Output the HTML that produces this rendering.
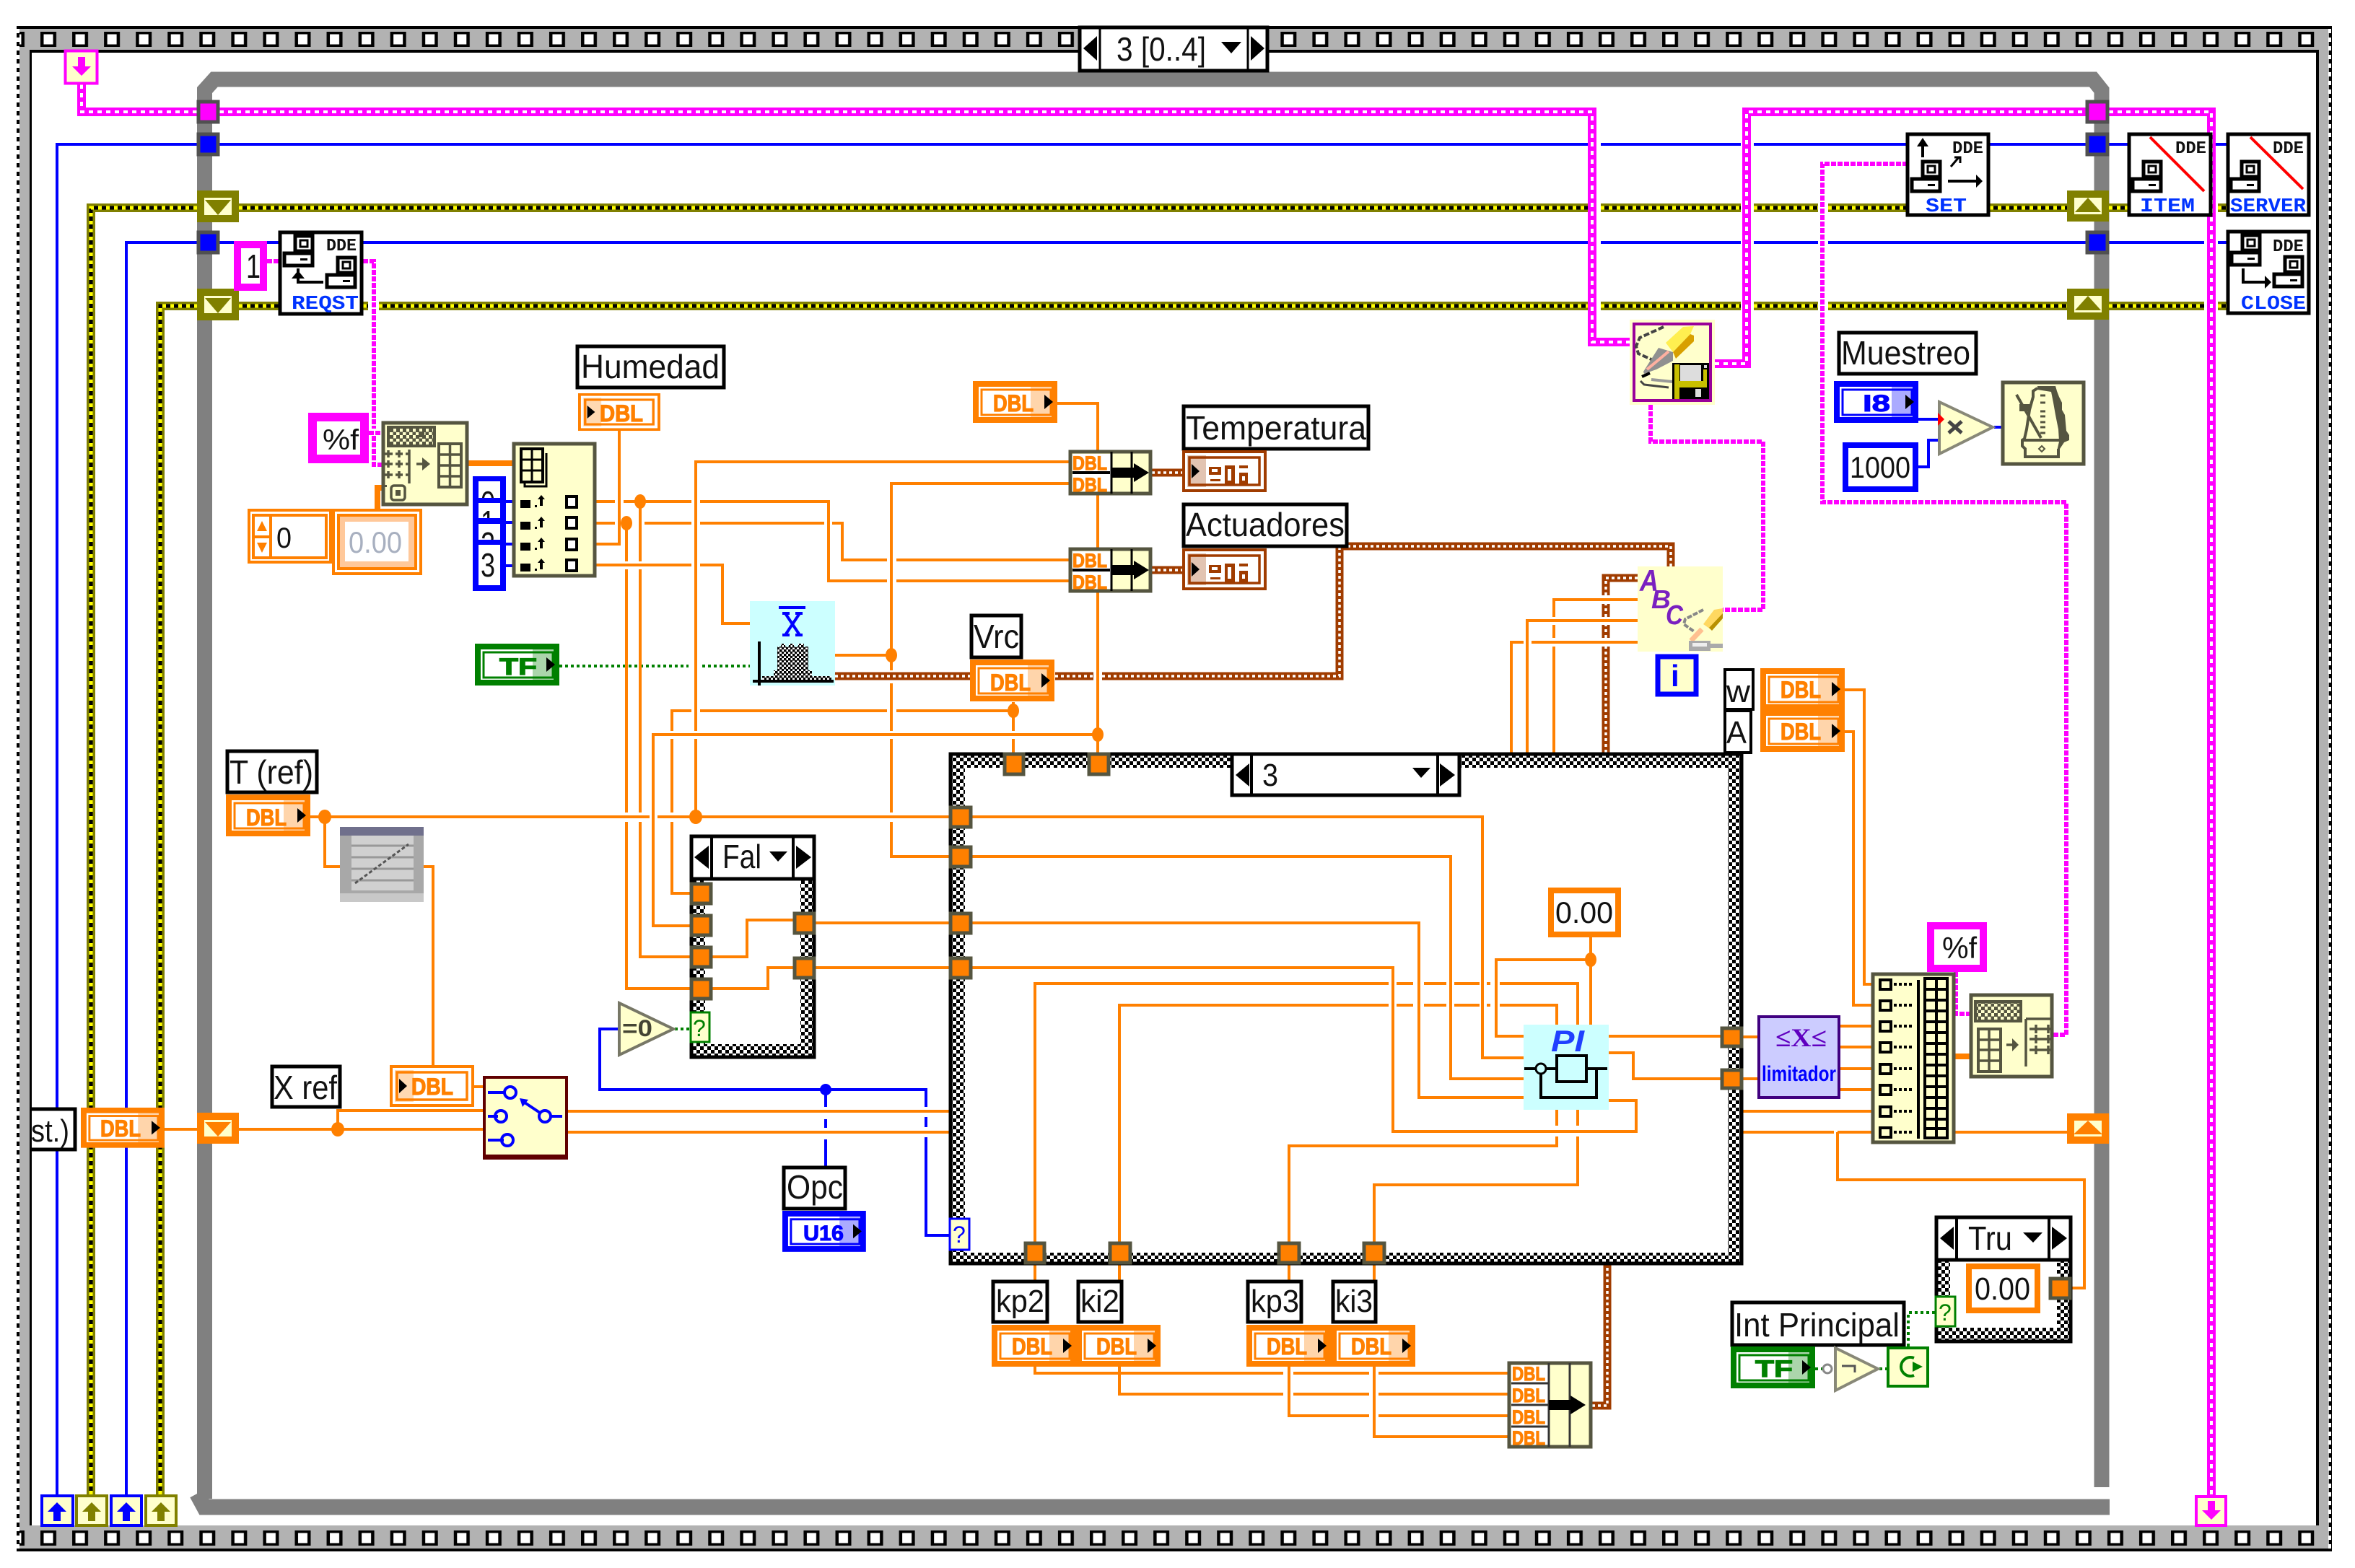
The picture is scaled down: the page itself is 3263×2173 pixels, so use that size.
<!DOCTYPE html>
<html><head><meta charset="utf-8"><title>Block diagram</title>
<style>
html,body{margin:0;padding:0;background:#fff;width:3263px;height:2173px;overflow:hidden}
svg{display:block}
text{font-family:"Liberation Sans",sans-serif;fill:#111}
.l{font-size:46px}
.b{font-weight:bold}
.m{font-family:"Liberation Mono",monospace;font-weight:bold}
.dO{font-weight:bold;fill:#ff8000;stroke:#ff8000;stroke-width:1.2px}
.dB{font-weight:bold;fill:#0000ff;stroke:#0000ff;stroke-width:1px}
.dG{font-weight:bold;fill:#008000;stroke:#008000;stroke-width:1.2px}
.o{fill:none;stroke:#ff8000;stroke-width:4}
.bl{fill:none;stroke:#0000ff;stroke-width:4}
.g{fill:none;stroke:#008000;stroke-width:4;stroke-dasharray:4 4}
.mt{fill:none;stroke:#ff00ff;stroke-width:12}
.mtd{fill:none;stroke:#fff;stroke-width:4;stroke-dasharray:6 6}
.mn{fill:none;stroke:#ff00ff;stroke-width:6;stroke-dasharray:7 2}
.y1{fill:none;stroke:#808000;stroke-width:12}
.y2{fill:none;stroke:#000;stroke-width:5}
.y3{fill:none;stroke:#ffff00;stroke-width:5;stroke-dasharray:5 6}
.br{fill:none;stroke:#a03c00;stroke-width:11}
.brd{fill:none;stroke:#fff;stroke-width:3.5;stroke-dasharray:4 4}
.lb{fill:#fff;stroke:#000;stroke-width:5}
.tn{fill:#ff8000;stroke:#555540;stroke-width:5}
.ic{fill:#ffffcc;stroke:#555540;stroke-width:5}
.n{fill:#ff8000}
.dde{fill:#fff;stroke:#000;stroke-width:5}
.blue{fill:#0033ff}
</style></head>
<body>
<svg xmlns="http://www.w3.org/2000/svg" width="3263" height="2173" viewBox="0 0 3263 2173">
<defs>
<pattern id="chk" width="10" height="10" patternUnits="userSpaceOnUse"><rect width="10" height="10" fill="#fff"/><rect width="5" height="5" fill="#000"/><rect x="5" y="5" width="5" height="5" fill="#000"/></pattern>
<pattern id="chk3" width="6" height="6" patternUnits="userSpaceOnUse"><rect width="6" height="6" fill="#fff"/><rect width="3.500" height="3.500" fill="#000"/><rect x="3" y="3" width="3.500" height="3.500" fill="#000"/></pattern>
<pattern id="chk4" width="9" height="9" patternUnits="userSpaceOnUse"><rect width="9" height="9" fill="#ffffcc"/><rect width="5" height="5" fill="#555540"/><rect x="4.500" y="4.500" width="5" height="5" fill="#555540"/></pattern>
<pattern id="ft" x="56" y="44" width="44.06" height="40" patternUnits="userSpaceOnUse"><rect width="22" height="21" fill="#000"/><rect x="4.5" y="3.5" width="13" height="14" fill="#fff"/></pattern>
<pattern id="fb" x="56" y="2121" width="44.06" height="40" patternUnits="userSpaceOnUse"><rect width="22" height="21" fill="#000"/><rect x="4.5" y="3.5" width="13" height="14" fill="#fff"/></pattern>
<g id="ctl">
<rect x="4" y="4" width="109" height="50" fill="#fff" stroke="currentColor" stroke-width="8"/>
<rect x="12" y="12" width="96" height="35" fill="#fff" stroke="currentColor" stroke-width="3"/>
<rect x="80" y="8" width="30" height="42" fill="currentColor" opacity=".33"/>
<polygon points="99,19 111,29 99,39" fill="#000"/>
</g>
<g id="ind">
<rect x="2" y="2" width="113" height="54" fill="#fff" stroke="currentColor" stroke-width="4"/>
<rect x="10" y="10" width="97" height="38" fill="#fff" stroke="currentColor" stroke-width="3.5"/>
<rect x="7" y="7" width="26" height="44" fill="currentColor" opacity=".3"/>
<polygon points="13,19 24,29 13,39" fill="#000"/>
</g>
<g id="pc">
<rect x="17" y="2" width="24" height="21" class="dde"/>
<rect x="24" y="8" width="10" height="9" fill="#fff" stroke="#000" stroke-width="3"/>
<rect x="2" y="26" width="39" height="17" class="dde"/>
<rect x="24" y="33" width="10" height="3" fill="#000"/>
</g>
<g id="bundle2">
<rect x="2" y="2" width="111" height="58" class="ic"/>
<rect x="5" y="5" width="54" height="52" fill="#fff"/>
<line x1="5" y1="31" x2="57" y2="31" stroke="#000" stroke-width="4"/>
<line x1="59" y1="2" x2="59" y2="60" stroke="#000" stroke-width="3"/>
<line x1="87" y1="2" x2="87" y2="60" stroke="#000" stroke-width="3"/>
<path d="M60 24h30v-6l21 13-21 13v-6h-30z" fill="#000"/>
</g>
<g id="arrD"><path d="M-5 -14h10v13h8l-13 13-13-13h8z"/></g>
</defs>

<rect width="3263" height="2173" fill="#fff"/>

<!-- outer sequence frame -->
<rect x="23" y="36" width="3208" height="2114" fill="#000"/>
<rect x="27" y="40" width="3200" height="2106" fill="#b2b2b2"/>
<rect x="41" y="69" width="3172" height="2045" fill="#000"/>
<rect x="44" y="73" width="3165" height="2041" fill="#fff" stroke="none"/>
<rect x="27" y="40" width="3199" height="29" fill="url(#ft)"/>
<rect x="27" y="2118" width="3199" height="28" fill="url(#fb)"/>
<line x1="25" y1="40" x2="25" y2="2146" stroke="#fff" stroke-width="4" stroke-dasharray="6 6"/>
<line x1="3228" y1="40" x2="3228" y2="2146" stroke="#fff" stroke-width="4" stroke-dasharray="6 6"/>

<!-- while loop frame -->
<path d="M283.5 2077V125L297 110H2900L2912 125V2061" fill="none" stroke="#808080" stroke-width="21"/>
<path d="M273 2070L283 2088.5H2923" fill="none" stroke="#808080" stroke-width="22"/>

<!-- selector top -->
<rect x="1496" y="38" width="260" height="60" fill="#fff" stroke="#000" stroke-width="5"/>
<line x1="1524" y1="38" x2="1524" y2="96" stroke="#000" stroke-width="3"/>
<line x1="1729" y1="38" x2="1729" y2="96" stroke="#000" stroke-width="3"/>
<polygon points="1520,50 1501,67 1520,84" fill="#000"/>
<polygon points="1733,50 1752,67 1733,84" fill="#000"/>
<polygon points="1692,58 1720,58 1706,74" fill="#000"/>
<text x="1547" y="84" class="l" textLength="124" lengthAdjust="spacingAndGlyphs">3 [0..4]</text>

<!-- thick wires: yellow -->
<path class="y1" d="M126 2071V288H273M331 288H2200M2218 288H2412M2430 288H2519M2533 288H2641M2757 288H2864M2922 288H2948M3073 288H3085"/>
<path class="y1" d="M222 2071V424H273M331 424H386M503 424H510M525 424H2200M2218 424H2412M2430 424H2519M2533 424H2864M2922 424H3054M3073 424H3085"/>
<path class="y2" d="M126 2071V288H273M331 288H2200M2218 288H2412M2430 288H2519M2533 288H2641M2757 288H2864M2922 288H2948M3073 288H3085"/>
<path class="y2" d="M222 2071V424H273M331 424H386M503 424H510M525 424H2200M2218 424H2412M2430 424H2519M2533 424H2864M2922 424H3054M3073 424H3085"/>
<path class="y3" d="M126 2071V288H273M331 288H2200M2218 288H2412M2430 288H2519M2533 288H2641M2757 288H2864M2922 288H2948M3073 288H3085"/>
<path class="y3" d="M222 2071V424H273M331 424H386M503 424H510M525 424H2200M2218 424H2412M2430 424H2519M2533 424H2864M2922 424H3054M3073 424H3085"/>

<!-- blue wires -->
<path class="bl" d="M79 2071V200H273M304 200H2200M2218 200H2412M2430 200H2641M2757 200H2890M2922 200H2948M3065 200H3085"/>
<path class="bl" d="M175 2071V336H273M304 336H324M370 336H386M503 336H2200M2218 336H2412M2430 336H2519M2533 336H2890M2922 336H3054M3073 336H3085"/>
<path class="bl" d="M701 695H710M701 724H710M701 754H710M701 784H710"/>
<path class="bl" d="M2658 581H2685M2658 647H2672V610H2685M2763 592H2773"/>
<path class="bl" d="M856 1426H831V1510H1283V1534M1283 1548V1562M1283 1576V1712H1315"/>
<path class="bl" d="M1144 1510V1534M1144 1551V1563M1144 1579V1616"/>
<circle cx="1144" cy="1510" r="8" fill="#0000ff"/>

<!-- magenta wires -->
<path class="mt" d="M113 117V155H273M304 155H2206V474H2261M2376 504H2420V155H2890M2922 155H3064V2072"/>
<path class="mtd" d="M113 117V155H273M304 155H2206V474H2261M2376 504H2420V155H2890M2922 155H3064V2072"/>
<path class="mn" d="M370 362H386M503 362H518V594M511 600H530M518 604V644H530M2710 1347V1405H2729M2845 1434H2863V696H2525V227H2641M2287 561V612H2443V845H2387"/>

<!-- brown wires -->
<path class="br" d="M1596 655H1638M1596 790H1638M1157 937H1344M1462 937H1515M1527 937H1856V757H2315V785M2225 1043V896M2225 884V866M2225 855V837M2225 825V801H2269M2206 1948H2227V1753"/>
<path class="brd" d="M1596 655H1638M1596 790H1638M1157 937H1344M1462 937H1515M1527 937H1856V757H2315V785M2225 1043V896M2225 884V866M2225 855V837M2225 825V801H2269M2206 1948H2227V1753"/>

<!-- green wires -->
<path class="g" d="M775 923H954M973 923H1039M935 1426H956M2644 1866V1819H2681M2515 1897H2526M2604 1897H2614"/>

<!-- orange wires outside cases -->
<path class="o" d="M826 695H852M864 695H958M970 695H1148V805H1229M1242 805H1481"/>
<path class="o" d="M826 725H852M893 725H958M970 725H1142M1153 725H1167V776H1229M1242 776H1481"/>
<path class="o" d="M826 754H858V597"/>
<path class="o" d="M826 783H958M970 783H1001V864H1039"/>
<path class="o" d="M868 725V778M868 789V1126M868 1139V1370H956"/>
<path class="o" d="M887 695V778M887 789V1126M887 1139V1326H956"/>
<path class="o" d="M1521 1018H905V1283H956"/>
<path class="o" d="M1404 985H1242M1229 985H970M958 985H931V1013M931 1024V1126M931 1139V1238H956"/>
<path class="o" d="M1481 640H964V1013M964 1024V1132"/>
<path class="o" d="M430 1132H900M911 1132H1315"/>
<path class="o" d="M1481 670H1235V929M1235 947V1013M1235 1024V1126M1235 1139V1187H1315"/>
<path class="o" d="M1157 908H1235"/>
<path class="o" d="M1130 1279H1315M1130 1341H1315"/>
<path class="o" d="M1404 973V1013M1404 1024V1043"/>
<path class="o" d="M1465 559H1521V1043"/>
<path class="o" d="M2269 831H2153V855M2153 866V884M2153 896V1043M2269 860H2116V1043M2269 890H2122M2111 890H2094V1043"/>
<path class="o" d="M2415 1437H2435M2415 1495H2435"/>
<path class="o" d="M1434 1753V1774M1551 1753V1774M1786 1753V1774M1904 1753V1774"/>
<path class="o" d="M1434 1893V1903H1778M1792 1903H1897M1910 1903H2089M1551 1893V1932H1778M1792 1932H1897M1910 1932H2089M1786 1893V1962H1897M1910 1962H2089M1904 1893V1991H2089"/>
<path class="o" d="M2555 956H2583V1364H2593M2555 1014H2568V1393H2593M2550 1422H2593M2550 1451H2593M2550 1481H2593M2550 1510H2593M785 1540H2593M785 1569H2541M2546 1569H2593M2546 1569V1635H2888V1785H2870M2827 1785H2839M2709 1569H2864"/>
<path class="o" d="M228 1565H273M331 1565H669M468 1565V1539H669M657 1506H669M600 1476V1201H587M450 1132V1201H471"/>
<path d="M647 642H710M2709 1464H2729M523 705V676H530" fill="none" stroke="#ff8000" stroke-width="8"/>
<ellipse class="n" cx="887" cy="695" rx="8" ry="10"/>
<ellipse class="n" cx="868" cy="725" rx="8" ry="10"/>
<ellipse class="n" cx="964" cy="1132" rx="9" ry="10"/>
<ellipse class="n" cx="450" cy="1132" rx="9" ry="10"/>
<ellipse class="n" cx="1235" cy="908" rx="8" ry="10"/>
<ellipse class="n" cx="1404" cy="985" rx="8" ry="10"/>
<ellipse class="n" cx="1521" cy="1018" rx="8" ry="10"/>
<ellipse class="n" cx="468" cy="1565" rx="9" ry="10"/>

<!-- tunnels on while -->
<rect x="275" y="141" width="27" height="28" fill="#ff00ff" stroke="#505050" stroke-width="5"/>
<rect x="275" y="186" width="27" height="28" fill="#0000ff" stroke="#505050" stroke-width="5"/>
<rect x="275" y="322" width="27" height="28" fill="#0000ff" stroke="#505050" stroke-width="5"/>
<rect x="2892" y="141" width="28" height="28" fill="#ff00ff" stroke="#505050" stroke-width="5"/>
<rect x="2892" y="186" width="28" height="28" fill="#0000ff" stroke="#505050" stroke-width="5"/>
<rect x="2892" y="322" width="28" height="28" fill="#0000ff" stroke="#505050" stroke-width="5"/>

<!-- shift registers -->
<rect x="278" y="269" width="48" height="34" fill="#ffffcc" stroke="#808000" stroke-width="10"/>
<polygon points="284,277 320,277 302,298" fill="#808000"/>
<rect x="278" y="405" width="48" height="34" fill="#ffffcc" stroke="#808000" stroke-width="10"/>
<polygon points="284,413 320,413 302,434" fill="#808000"/>
<rect x="2869" y="269" width="48" height="33" fill="#ffffcc" stroke="#808000" stroke-width="10"/>
<polygon points="2875,294 2911,294 2893,274" fill="#808000"/>
<rect x="2869" y="405" width="48" height="33" fill="#ffffcc" stroke="#808000" stroke-width="10"/>
<polygon points="2875,430 2911,430 2893,410" fill="#808000"/>
<rect x="278" y="1547" width="48" height="33" fill="#ffffcc" stroke="#ff8000" stroke-width="10"/>
<polygon points="284,1555 320,1555 302,1575" fill="#ff8000"/>
<rect x="2869" y="1548" width="48" height="32" fill="#ffffcc" stroke="#ff8000" stroke-width="10"/>
<polygon points="2873,1572 2913,1572 2893,1553" fill="#ff8000"/>

<!-- sequence local boxes -->
<rect x="90.500" y="70.500" width="44" height="45" fill="#ffffcc" stroke="#ff00ff" stroke-width="4"/>
<g transform="translate(113 93)" fill="#ff00ff"><use href="#arrD"/></g>
<rect x="3043" y="2074" width="41" height="40" fill="#ffffcc" stroke="#ff00ff" stroke-width="4"/>
<g transform="translate(3064 2094)" fill="#ff00ff"><use href="#arrD"/></g>
<rect x="58" y="2073" width="43" height="41" fill="#ffffcc" stroke="#0000ff" stroke-width="4"/>
<g transform="translate(79 2094) scale(1 -1)" fill="#0000ff"><use href="#arrD"/></g>
<rect x="106" y="2073" width="42" height="41" fill="#ffffcc" stroke="#808000" stroke-width="4"/>
<g transform="translate(127 2094) scale(1 -1)" fill="#808000"><use href="#arrD"/></g>
<rect x="154" y="2073" width="42" height="41" fill="#ffffcc" stroke="#0000ff" stroke-width="4"/>
<g transform="translate(175 2094) scale(1 -1)" fill="#0000ff"><use href="#arrD"/></g>
<rect x="202" y="2073" width="42" height="41" fill="#ffffcc" stroke="#808000" stroke-width="4"/>
<g transform="translate(223 2094) scale(1 -1)" fill="#808000"><use href="#arrD"/></g>

<!-- DDE REQST -->
<rect x="388" y="322" width="113" height="113" fill="#fff" stroke="#000" stroke-width="5"/>
<use href="#pc" x="392" y="325"/>
<use href="#pc" x="451" y="355"/>
<text class="m" x="452" y="347" font-size="24" textLength="42" lengthAdjust="spacingAndGlyphs">DDE</text>
<path d="M413 372V391H448" fill="none" stroke="#000" stroke-width="4"/><polygon points="413,375 404,386 422,386" fill="#000"/>
<text class="m blue" x="404" y="428" font-size="27" textLength="93" lengthAdjust="spacingAndGlyphs">REQST</text>
<!-- 1 const -->
<rect x="329" y="339" width="36" height="59" fill="#fff" stroke="#ff00ff" stroke-width="10"/>
<text x="341" y="385" class="l" textLength="20" lengthAdjust="spacingAndGlyphs">1</text>

<!-- %f + format -->
<rect x="433" y="578" width="72" height="58" fill="#fff" stroke="#ff00ff" stroke-width="12"/>
<text x="447" y="623" font-size="40" textLength="50" lengthAdjust="spacingAndGlyphs">%f</text>
<rect x="531" y="586" width="116" height="113" class="ic"/>
<rect x="538" y="592" width="64" height="26" fill="url(#chk4)" stroke="#555540" stroke-width="4"/>
<rect x="580" y="598" width="8" height="8" fill="#555540"/>
<rect x="608" y="615" width="31" height="60" fill="none" stroke="#555540" stroke-width="4"/>
<path d="M623.500 615V675M608 630H639M608 645H639M608 660H639" stroke="#555540" stroke-width="3.500"/>
<path d="M533 629H544M538 624V634M548 629H558M553 624V634M533 643H544M538 638V648M548 643H558M553 638V648M533 658H544M538 653V663M548 658H558M553 653V663M567 623V670M562 629H567M562 643H567M562 658H567M577 643H590" stroke="#555540" stroke-width="3.500" fill="none"/>
<polygon points="585,634 596,643 585,652" fill="#555540"/>
<rect x="542" y="673" width="19" height="20" rx="4" fill="none" stroke="#555540" stroke-width="3.500"/>
<rect x="548" y="679" width="7" height="8" fill="#555540"/>
<rect x="530" y="672" width="6" height="3" fill="#555540"/>

<!-- 0 / 0.00 -->
<rect x="345" y="707" width="113" height="72" fill="#fff" stroke="#ff8000" stroke-width="4"/>
<rect x="351" y="714" width="101" height="59" fill="#fff" stroke="#ff8000" stroke-width="4"/>
<line x1="375" y1="714" x2="375" y2="773" stroke="#ff8000" stroke-width="4"/>
<line x1="353" y1="744" x2="373" y2="744" stroke="#ff8000" stroke-width="4"/>
<polygon points="363,722 356,736 370,736" fill="#ff8000"/><polygon points="363,766 356,752 370,752" fill="#ff8000"/>
<text x="383" y="759" font-size="40" textLength="21" lengthAdjust="spacingAndGlyphs">0</text>
<rect x="462" y="707" width="121" height="88" fill="#fff" stroke="#ff8000" stroke-width="4"/>
<rect x="469" y="714" width="107" height="74" fill="#ffc89a" stroke="#ff8000" stroke-width="4"/>
<rect x="478" y="723" width="88" height="55" fill="#fff"/>
<text x="483" y="766" font-size="42" textLength="74" lengthAdjust="spacingAndGlyphs" style="fill:#a8b0c0">0.00</text>

<!-- index array + constants -->
<rect x="655" y="660" width="46" height="159" fill="#0000ff"/>
<rect x="663" y="667" width="30" height="23" fill="#fff"/>
<text x="666" y="713" font-size="46" textLength="20" lengthAdjust="spacingAndGlyphs">0</text>
<rect x="655" y="690" width="46" height="7" fill="#0000ff"/><rect x="655" y="713" width="46" height="13" fill="#0000ff"/>
<rect x="663" y="697" width="30" height="21" fill="#fff"/>
<text x="666" y="740" font-size="46" textLength="20" lengthAdjust="spacingAndGlyphs">1</text>
<rect x="655" y="718" width="46" height="8" fill="#0000ff"/><rect x="655" y="748" width="46" height="7" fill="#0000ff"/>
<rect x="663" y="726" width="30" height="22" fill="#fff"/>
<text x="666" y="770" font-size="46" textLength="20" lengthAdjust="spacingAndGlyphs">2</text>
<rect x="655" y="748" width="46" height="7" fill="#0000ff"/>
<rect x="663" y="755" width="30" height="56" fill="#fff"/>
<text x="666" y="799" font-size="46" textLength="20" lengthAdjust="spacingAndGlyphs">3</text>
<rect x="712" y="615" width="112" height="183" class="ic"/>
<path d="M727 628V674H757V628" fill="none" stroke="#000" stroke-width="3"/>
<rect x="722" y="622" width="30" height="46" fill="#ffffcc" stroke="#000" stroke-width="4"/>
<path d="M737 622V668M722 637H752M722 652H752" stroke="#000" stroke-width="3"/>
<g fill="#000">
<rect x="721" y="693" width="14" height="11"/><rect x="721" y="723" width="14" height="11"/><rect x="721" y="752" width="14" height="11"/><rect x="721" y="781" width="14" height="11"/>
<path d="M750 686l5 6h-3v9h-4v-9h-3zM741 700h3v3h-3zM750 716l5 6h-3v9h-4v-9h-3zM741 730h3v3h-3zM750 745l5 6h-3v9h-4v-9h-3zM741 759h3v3h-3zM750 774l5 6h-3v9h-4v-9h-3zM741 788h3v3h-3z"/>
</g>
<g fill="#fff" stroke="#000" stroke-width="4">
<rect x="785" y="688" width="14" height="15"/><rect x="785" y="717" width="14" height="15"/><rect x="785" y="747" width="14" height="15"/><rect x="785" y="776" width="14" height="15"/>
</g>

<!-- labels -->
<rect class="lb" x="800" y="480" width="203" height="57"/>
<text x="805" y="524" class="l" textLength="192" lengthAdjust="spacingAndGlyphs">Humedad</text>
<use href="#ind" transform="translate(801 545) scale(.974 .897)" style="color:#ff8000"/>
<text class="dO" x="831" y="584" font-size="32" textLength="60" lengthAdjust="spacingAndGlyphs">DBL</text>

<use href="#ctl" transform="translate(1348 528)" style="color:#ff8000"/>
<text class="dO" x="1376" y="570" font-size="32" textLength="56" lengthAdjust="spacingAndGlyphs">DBL</text>

<rect class="lb" x="1640" y="563" width="256" height="59"/>
<text x="1643" y="609" class="l" textLength="250" lengthAdjust="spacingAndGlyphs">Temperatura</text>
<rect class="lb" x="1640" y="699" width="226" height="58"/>
<text x="1643" y="743" class="l" textLength="220" lengthAdjust="spacingAndGlyphs">Actuadores</text>

<use href="#bundle2" transform="translate(1481 624)"/>
<use href="#bundle2" transform="translate(1481 759)"/>
<text class="dO" x="1486" y="651" font-size="27" textLength="48" lengthAdjust="spacingAndGlyphs">DBL</text>
<text class="dO" x="1486" y="681" font-size="27" textLength="48" lengthAdjust="spacingAndGlyphs">DBL</text>
<text class="dO" x="1486" y="786" font-size="27" textLength="48" lengthAdjust="spacingAndGlyphs">DBL</text>
<text class="dO" x="1486" y="816" font-size="27" textLength="48" lengthAdjust="spacingAndGlyphs">DBL</text>
<!-- cluster array indicators -->
<use href="#ind" transform="translate(1638 624)" style="color:#a03c00"/>
<use href="#ind" transform="translate(1638 760)" style="color:#a03c00"/>
<g fill="#a03c00">
<path d="M1675 647h17v11h-17zM1677 664h14v3h-14zM1697 645h14v26h-14zM1717 645h12v4h-12zM1717 655h12v16h-12z"/>
<path d="M1675 783h17v11h-17zM1677 800h14v3h-14zM1697 781h14v26h-14zM1717 781h12v4h-12zM1717 791h12v16h-12z"/>
</g>
<g fill="#fff"><rect x="1679" y="650" width="8" height="4"/><rect x="1701" y="650" width="5" height="16"/><rect x="1721" y="660" width="4" height="6"/><rect x="1679" y="786" width="8" height="4"/><rect x="1701" y="786" width="5" height="16"/><rect x="1721" y="796" width="4" height="6"/></g>

<!-- TF -->
<use href="#ctl" transform="translate(658 892)" style="color:#008000"/>
<text class="dG" x="692" y="935" font-size="32" textLength="52" lengthAdjust="spacingAndGlyphs">TF</text>

<!-- histogram -->
<rect x="1039" y="833" width="118" height="117" fill="#ccffff"/>
<path d="M1079 842H1116" stroke="#0000ff" stroke-width="4"/>
<path d="M1084 850H1094M1102 850H1112M1088 850L1108 880M1108 850L1088 880M1084 880H1094M1102 880H1112" stroke="#0000ff" stroke-width="4" fill="none"/>
<path d="M1052 889V950M1043 944H1155" stroke="#000" stroke-width="4"/>
<path d="M1056 942V937H1072V929H1077V896H1082V892H1088V896H1093V892H1100V896H1106V892H1114V896H1120V929H1125V937H1152V942z" fill="url(#chk3)"/>

<!-- Vrc -->
<rect class="lb" x="1346" y="853" width="69" height="58"/>
<text x="1349" y="898" class="l" textLength="63" lengthAdjust="spacingAndGlyphs">Vrc</text>
<use href="#ctl" transform="translate(1344 914)" style="color:#ff8000"/>
<text class="dO" x="1372" y="957" font-size="32" textLength="56" lengthAdjust="spacingAndGlyphs">DBL</text>

<!-- T ref -->
<rect class="lb" x="315" y="1041" width="124" height="57"/>
<text x="318" y="1086" class="l" textLength="116" lengthAdjust="spacingAndGlyphs">T (ref)</text>
<use href="#ctl" transform="translate(313 1101)" style="color:#ff8000"/>
<text class="dO" x="341" y="1144" font-size="32" textLength="56" lengthAdjust="spacingAndGlyphs">DBL</text>

<!-- grey graph -->
<rect x="471" y="1146" width="116" height="104" fill="#c8c8c8"/>
<rect x="471" y="1146" width="116" height="92" fill="#a8a8a8"/>
<rect x="471" y="1146" width="116" height="12" fill="#70708c"/>
<rect x="487" y="1158" width="86" height="76" fill="#d0d0d0"/>
<path d="M487 1172H573M487 1188H573M487 1204H573M487 1220H573" stroke="#999" stroke-width="3"/>
<path d="M492 1224L566 1170" stroke="#555" stroke-width="3" stroke-dasharray="5 3"/>

<!-- st.) & DBL -->
<path d="M44 1537H104V1593H44" fill="#fff" stroke="#000" stroke-width="5"/>
<text x="43" y="1582" font-size="44" textLength="53" lengthAdjust="spacingAndGlyphs">st.)</text>
<use href="#ctl" transform="translate(112 1535) scale(.99 .96)" style="color:#ff8000"/>
<text class="dO" x="139" y="1575" font-size="32" textLength="56" lengthAdjust="spacingAndGlyphs">DBL</text>

<!-- X ref / DBL / switch -->
<rect class="lb" x="377" y="1478" width="94" height="56"/>
<text x="379" y="1523" class="l" textLength="88" lengthAdjust="spacingAndGlyphs">X ref</text>
<use href="#ind" transform="translate(540 1476)" style="color:#ff8000"/>
<text class="dO" x="570" y="1517" font-size="32" textLength="58" lengthAdjust="spacingAndGlyphs">DBL</text>
<rect x="671" y="1493" width="114" height="112" fill="#ffffcc" stroke="#600000" stroke-width="4"/>
<rect x="669" y="1600" width="116" height="7" fill="#600000"/>
<g fill="none" stroke="#0000ff" stroke-width="4">
<path d="M676 1514H698M676 1547H690M676 1580H698M763 1547H779M727 1528L748 1542"/>
<circle cx="707" cy="1514" r="8"/><circle cx="694" cy="1547" r="8"/><circle cx="703" cy="1580" r="8"/><circle cx="755" cy="1547" r="8"/>
</g>
<polygon points="720,1522 732,1524 724,1534" fill="#0000ff"/>

<!-- equal zero -->
<polygon points="858,1390 933,1426 858,1462" fill="#ffffcc" stroke="#777766" stroke-width="4"/>
<text class="b" x="862" y="1436" font-size="32" textLength="42" lengthAdjust="spacingAndGlyphs" style="fill:#444433">=0</text>

<!-- Opc -->
<rect class="lb" x="1086" y="1618" width="85" height="57"/>
<text x="1090" y="1661" class="l" textLength="78" lengthAdjust="spacingAndGlyphs">Opc</text>
<use href="#ctl" transform="translate(1084 1678) scale(.99 .98)" style="color:#0000ff"/>
<text class="dB" x="1113" y="1719" font-size="30" textLength="56" lengthAdjust="spacingAndGlyphs">U16</text>

<!-- Fal case -->
<rect x="958" y="1159" width="170" height="306" fill="url(#chk)" stroke="#000" stroke-width="5"/>
<rect x="977" y="1218" width="132" height="229" fill="#fff"/>
<rect x="958" y="1159" width="170" height="59" fill="#fff" stroke="#000" stroke-width="5"/>
<path d="M986 1159V1218M1099 1159V1218" stroke="#000" stroke-width="4"/>
<polygon points="982,1172 962,1188 982,1204" fill="#000"/><polygon points="1103,1172 1124,1188 1103,1204" fill="#000"/>
<polygon points="1066,1180 1091,1180 1078,1194" fill="#000"/>
<text x="1001" y="1203" class="l" textLength="54" lengthAdjust="spacingAndGlyphs">Fal</text>
<path class="o" d="M987 1326H1035V1275H1099M987 1370H1064V1341H1099"/>
<rect class="tn" x="958" y="1225" width="27" height="27"/><rect class="tn" x="958" y="1269" width="27" height="27"/><rect class="tn" x="958" y="1313" width="27" height="27"/><rect class="tn" x="958" y="1357" width="27" height="27"/>
<rect class="tn" x="1101" y="1266" width="27" height="27"/><rect class="tn" x="1101" y="1328" width="27" height="27"/>
<rect x="957" y="1403" width="26" height="41" fill="#ffffcc" stroke="#008000" stroke-width="3"/>
<text x="960" y="1436" font-size="32" style="fill:#008000">?</text>

<!-- Big case -->
<rect x="1317" y="1045" width="1096" height="706" fill="url(#chk)" stroke="#000" stroke-width="5"/>
<rect x="1337" y="1064" width="1057" height="672" fill="#fff"/>
<rect x="1707" y="1045" width="315" height="57" fill="#fff" stroke="#000" stroke-width="5"/>
<path d="M1734 1045V1102M1992 1045V1102" stroke="#000" stroke-width="4"/>
<polygon points="1731,1058 1712,1074 1731,1090" fill="#000"/><polygon points="1995,1058 2016,1074 1995,1090" fill="#000"/>
<polygon points="1957,1064 1982,1064 1969,1078" fill="#000"/>
<text x="1749" y="1089" font-size="44" textLength="22" lengthAdjust="spacingAndGlyphs">3</text>

<path class="o" d="M1347 1132H2054V1466H2111M1347 1187H2010V1495H2111M1347 1279H1966V1521H2111M1347 1341H1930V1568H2267V1525H2229"/>
<path class="o" d="M2204 1299V1420M2204 1330H2073V1436H2111"/>
<ellipse class="n" cx="2204" cy="1330" rx="8" ry="10"/>
<path class="o" d="M1434 1721V1363H1924M1935 1363H1958M1973 1363H2004M2015 1363H2050M2060 1363H2065M2078 1363H2186V1420"/>
<path class="o" d="M1551 1721V1393H1924M1935 1393H1958M1973 1393H2004M2015 1393H2050M2060 1393H2065M2078 1393H2157V1420"/>
<path class="o" d="M1786 1721V1588H2157V1575M2157 1560V1538M1904 1721V1642H2186V1575M2186 1560V1538"/>
<path class="o" d="M2229 1436H2384M2229 1459H2263V1495H2384"/>

<rect class="tn" x="1392" y="1045" width="26" height="28"/><rect class="tn" x="1509" y="1045" width="27" height="28"/>
<rect class="tn" x="1317" y="1119" width="28" height="27"/><rect class="tn" x="1317" y="1174" width="28" height="27"/><rect class="tn" x="1317" y="1266" width="28" height="27"/><rect class="tn" x="1317" y="1328" width="28" height="27"/>
<rect class="tn" x="1421" y="1723" width="26" height="27"/><rect class="tn" x="1538" y="1723" width="28" height="27"/><rect class="tn" x="1772" y="1723" width="28" height="27"/><rect class="tn" x="1890" y="1723" width="28" height="27"/>
<rect class="tn" x="2386" y="1425" width="27" height="25"/><rect class="tn" x="2386" y="1483" width="27" height="25"/>
<rect x="1316" y="1689" width="27" height="43" fill="#ffffcc" stroke="#0000ff" stroke-width="3"/>
<text x="1320" y="1722" font-size="32" style="fill:#0000ff">?</text>

<!-- 0.00 const -->
<rect x="2149" y="1234" width="93" height="61" fill="#fff" stroke="#ff8000" stroke-width="8"/>
<text x="2155" y="1279" font-size="42" textLength="80" lengthAdjust="spacingAndGlyphs">0.00</text>

<!-- PI -->
<rect x="2111" y="1420" width="118" height="118" fill="#ccffff"/>
<text x="2149" y="1457" font-size="42" font-style="italic" class="b" textLength="46" lengthAdjust="spacingAndGlyphs" style="fill:#2040ff">PI</text>
<rect x="2157" y="1463" width="41" height="36" fill="#ccffff" stroke="#000" stroke-width="4"/>
<path d="M2112 1481H2157M2198 1481H2227M2212 1481V1521H2135V1487" fill="none" stroke="#000" stroke-width="4"/>
<circle cx="2135" cy="1481" r="7" fill="#ccffff" stroke="#000" stroke-width="3"/>

<!-- kp / ki labels -->
<rect class="lb" x="1376" y="1776" width="75" height="56"/><text x="1380" y="1818" font-size="44" textLength="67" lengthAdjust="spacingAndGlyphs">kp2</text>
<rect class="lb" x="1494" y="1776" width="60" height="56"/><text x="1497" y="1818" font-size="44" textLength="54" lengthAdjust="spacingAndGlyphs">ki2</text>
<rect class="lb" x="1729" y="1776" width="74" height="56"/><text x="1733" y="1818" font-size="44" textLength="67" lengthAdjust="spacingAndGlyphs">kp3</text>
<rect class="lb" x="1847" y="1776" width="59" height="56"/><text x="1850" y="1818" font-size="44" textLength="52" lengthAdjust="spacingAndGlyphs">ki3</text>
<use href="#ctl" transform="translate(1374 1836)" style="color:#ff8000"/><text class="dO" x="1402" y="1877" font-size="32" textLength="56" lengthAdjust="spacingAndGlyphs">DBL</text>
<use href="#ctl" transform="translate(1491 1836)" style="color:#ff8000"/><text class="dO" x="1519" y="1877" font-size="32" textLength="56" lengthAdjust="spacingAndGlyphs">DBL</text>
<use href="#ctl" transform="translate(1727 1836)" style="color:#ff8000"/><text class="dO" x="1755" y="1877" font-size="32" textLength="56" lengthAdjust="spacingAndGlyphs">DBL</text>
<use href="#ctl" transform="translate(1844 1836)" style="color:#ff8000"/><text class="dO" x="1872" y="1877" font-size="32" textLength="56" lengthAdjust="spacingAndGlyphs">DBL</text>

<!-- bundle 3 -->
<rect x="2091" y="1889" width="113" height="116" class="ic"/>
<rect x="2094" y="1892" width="51" height="110" fill="#fff"/>
<path d="M2094 1917H2145M2094 1947H2145M2094 1977H2145M2146 1889V2005M2175 1889V2005" stroke="#333" stroke-width="3"/>
<path d="M2146 1940h30v-6l21 13-21 13v-6h-30z" fill="#000"/>
<text class="dO" x="2095" y="1913" font-size="27" textLength="46" lengthAdjust="spacingAndGlyphs">DBL</text>
<text class="dO" x="2095" y="1943" font-size="27" textLength="46" lengthAdjust="spacingAndGlyphs">DBL</text>
<text class="dO" x="2095" y="1973" font-size="27" textLength="46" lengthAdjust="spacingAndGlyphs">DBL</text>
<text class="dO" x="2095" y="2002" font-size="27" textLength="46" lengthAdjust="spacingAndGlyphs">DBL</text>

<!-- write icon -->
<rect x="2258" y="443" width="118" height="118" fill="#ffffcc"/>
<rect x="2264" y="449" width="106" height="106" fill="#ffffcc" stroke="#990099" stroke-width="4"/>
<polygon points="2308,475 2332,453 2347,452 2342,463 2318,488" fill="#ffef50"/>
<polygon points="2318,488 2342,463 2347,465 2347,473 2322,497" fill="#d8a000"/>
<polygon points="2298,482 2318,488 2318,500 2295,512 2278,518 2277,515" fill="#909090"/>
<path d="M2312 487L2282 512" stroke="#ffb0a0" stroke-width="4"/>
<path d="M2275 522L2286 517" stroke="#000" stroke-width="4"/>
<path d="M2305 453L2272 468L2267 480L2270 490L2288 498" fill="none" stroke="#444" stroke-width="4" stroke-dasharray="8 3"/>
<path d="M2273 528L2278 533L2312 537" fill="none" stroke="#444" stroke-width="3"/>
<path d="M2288 526L2317 529" stroke="#999" stroke-width="4"/>
<rect x="2317" y="503" width="51" height="50" fill="#000"/>
<path d="M2320 505h7v48h-7zM2360 512h5v25h-5zM2320 528h45v9h-45z" fill="#c8c000"/>
<rect x="2328" y="506" width="29" height="22" fill="#ddd"/>
<rect x="2361" y="506" width="4" height="4" fill="#ddd"/>
<rect x="2349" y="539" width="8" height="11" fill="#ddd"/>

<!-- ABC icon -->
<rect x="2269" y="785" width="118" height="118" fill="#ffffcc"/>
<text x="2272" y="819" font-size="42" font-style="italic" class="b" textLength="26" lengthAdjust="spacingAndGlyphs" style="fill:#7a20c0">A</text>
<text x="2288" y="843" font-size="36" font-style="italic" class="b" textLength="27" lengthAdjust="spacingAndGlyphs" style="fill:#7a20c0">B</text>
<text x="2308" y="865" font-size="38" font-style="italic" class="b" textLength="24" lengthAdjust="spacingAndGlyphs" style="fill:#7a20c0">C</text>
<path d="M2360 845L2335 858L2333 865L2347 875" fill="none" stroke="#888" stroke-width="4" stroke-dasharray="7 2"/>
<polygon points="2360,865 2375,845 2387,843 2387,855 2370,872" fill="#ffd860"/>
<polygon points="2368,870 2387,850 2387,857 2372,874" fill="#b89000"/>
<path d="M2358 872L2343 888" stroke="#ffc090" stroke-width="7"/>
<rect x="2340" y="888" width="30" height="14" fill="#aaa"/>
<rect x="2370" y="892" width="17" height="6" fill="#aaa"/>
<rect x="2345" y="891" width="20" height="5" fill="#eee"/>
<rect x="2297" y="910" width="53" height="52" fill="#ffffcc" stroke="#0000ff" stroke-width="7"/>
<text class="b" x="2315" y="951" font-size="42" style="fill:#0000ff">i</text>

<!-- w A -->
<rect x="2390" y="928" width="39" height="55" fill="#fff" stroke="#000" stroke-width="4"/>
<text x="2392" y="973" font-size="44" textLength="33" lengthAdjust="spacingAndGlyphs">w</text>
<rect x="2390" y="985" width="36" height="58" fill="#fff" stroke="#000" stroke-width="4"/>
<text x="2392" y="1030" font-size="44" textLength="28" lengthAdjust="spacingAndGlyphs">A</text>
<use href="#ctl" transform="translate(2439 926)" style="color:#ff8000"/><text class="dO" x="2467" y="967" font-size="32" textLength="56" lengthAdjust="spacingAndGlyphs">DBL</text>
<use href="#ctl" transform="translate(2439 984)" style="color:#ff8000"/><text class="dO" x="2467" y="1025" font-size="32" textLength="56" lengthAdjust="spacingAndGlyphs">DBL</text>

<!-- limitador -->
<rect x="2437" y="1409" width="111" height="112" fill="#ccccff" stroke="#400080" stroke-width="4"/>
<text class="b" x="2460" y="1450" font-size="36" textLength="71" lengthAdjust="spacingAndGlyphs" style="fill:#6000c0;font-family:'Liberation Serif',serif">≤X≤</text>
<text class="b" x="2441" y="1498" font-size="30" textLength="103" lengthAdjust="spacingAndGlyphs" style="fill:#0000ff">limitador</text>

<!-- build array -->
<rect x="2595" y="1350" width="112" height="233" class="ic"/>
<g fill="none" stroke="#000" stroke-width="4">
<rect x="2605" y="1358" width="15" height="13"/><rect x="2605" y="1387" width="15" height="13"/><rect x="2605" y="1416" width="15" height="13"/><rect x="2605" y="1445" width="15" height="13"/><rect x="2605" y="1475" width="15" height="13"/><rect x="2605" y="1504" width="15" height="13"/><rect x="2605" y="1534" width="15" height="13"/><rect x="2605" y="1563" width="15" height="13"/>
<rect x="2667" y="1356" width="31" height="221"/>
<path d="M2683 1356V1577M2667 1371H2698M2667 1386H2698M2667 1401H2698M2667 1416H2698M2667 1431H2698M2667 1446H2698M2667 1461H2698M2667 1476H2698M2667 1491H2698M2667 1506H2698M2667 1521H2698M2667 1536H2698M2667 1551H2698M2667 1564H2698"/>
<path d="M2658 1358V1578"/>
<path d="M2624 1364H2650M2624 1393H2650M2624 1422H2650M2624 1451H2650M2624 1481H2650M2624 1510H2650M2624 1540H2650M2624 1569H2650" stroke-dasharray="4 3"/>
</g>

<!-- %f 2 + format 2 -->
<rect x="2675" y="1283" width="73" height="59" fill="#fff" stroke="#ff00ff" stroke-width="10"/>
<text x="2691" y="1328" font-size="42" textLength="48" lengthAdjust="spacingAndGlyphs">%f</text>
<rect x="2731" y="1379" width="112" height="113" class="ic"/>
<rect x="2737" y="1388" width="63" height="27" fill="url(#chk4)" stroke="#555540" stroke-width="4"/>
<rect x="2741" y="1426" width="31" height="59" fill="none" stroke="#555540" stroke-width="4"/>
<path d="M2756 1426V1485M2741 1441H2772M2741 1455H2772M2741 1470H2772M2780 1448H2790" stroke="#555540" stroke-width="3.500"/>
<polygon points="2788,1439 2797,1448 2788,1457" fill="#555540"/>
<path d="M2807 1412H2842M2807 1412V1478M2812 1426H2842M2812 1440H2842M2812 1455H2842M2821 1420V1432M2838 1420V1432M2821 1434V1446M2838 1434V1446M2821 1449V1461M2838 1449V1461" stroke="#555540" stroke-width="3.500" fill="none"/>

<!-- Tru case -->
<rect x="2683" y="1687" width="186" height="172" fill="url(#chk)" stroke="#000" stroke-width="5"/>
<rect x="2702" y="1746" width="148" height="94" fill="#fff"/>
<rect x="2683" y="1687" width="186" height="59" fill="#fff" stroke="#000" stroke-width="5"/>
<path d="M2711 1687V1746M2839 1687V1746" stroke="#000" stroke-width="4"/>
<polygon points="2707,1700 2688,1716 2707,1732" fill="#000"/><polygon points="2843,1700 2864,1716 2843,1732" fill="#000"/>
<polygon points="2803,1708 2830,1708 2817,1722" fill="#000"/>
<text x="2727" y="1732" class="l" textLength="61" lengthAdjust="spacingAndGlyphs">Tru</text>
<rect x="2728" y="1755" width="95" height="61" fill="#fff" stroke="#ff8000" stroke-width="8"/>
<text x="2736" y="1801" font-size="44" textLength="77" lengthAdjust="spacingAndGlyphs">0.00</text>
<rect class="tn" x="2841" y="1772" width="27" height="27"/>
<rect x="2682" y="1797" width="27" height="41" fill="#ffffcc" stroke="#008000" stroke-width="3"/>
<text x="2686" y="1830" font-size="32" style="fill:#008000">?</text>

<!-- Int Principal -->
<rect x="2400" y="1805" width="238" height="59" fill="#fff" stroke="#000" stroke-width="5"/>
<text x="2403" y="1852" class="l" textLength="229" lengthAdjust="spacingAndGlyphs">Int Principal</text>
<use href="#ctl" transform="translate(2398 1866)" style="color:#008000"/>
<text class="dG" x="2432" y="1908" font-size="32" textLength="52" lengthAdjust="spacingAndGlyphs">TF</text>
<circle cx="2532" cy="1897" r="6" fill="#fff" stroke="#888" stroke-width="3"/>
<polygon points="2543,1868 2602,1897 2543,1927" fill="#ffffcc" stroke="#888878" stroke-width="4"/>
<path d="M2552 1893H2570V1902" fill="none" stroke="#555" stroke-width="3"/>
<rect x="2616" y="1868" width="55" height="53" fill="#ffffcc" stroke="#008000" stroke-width="4"/>
<path d="M2652 1882A13 13 0 1 0 2652 1906" fill="none" stroke="#008000" stroke-width="4"/>
<polygon points="2650,1887 2664,1894 2650,1901" fill="#008000"/>

<!-- SET -->
<rect x="2643" y="186" width="112" height="112" fill="#fff" stroke="#000" stroke-width="5"/>
<path d="M2664 198V218" stroke="#000" stroke-width="4"/><polygon points="2664,191 2656,203 2672,203" fill="#000"/>
<use href="#pc" x="2647" y="222"/>
<text class="m" x="2705" y="212" font-size="24" textLength="43" lengthAdjust="spacingAndGlyphs">DDE</text>
<path d="M2703 231L2714 218M2708 218H2716V226" fill="none" stroke="#000" stroke-width="3"/>
<path d="M2699 251H2740" stroke="#000" stroke-width="4"/><polygon points="2738,242 2747,251 2738,260" fill="#000"/>
<text class="m blue" x="2668" y="293" font-size="27" textLength="57" lengthAdjust="spacingAndGlyphs">SET</text>

<!-- ITEM -->
<rect x="2950" y="186" width="113" height="112" fill="#fff" stroke="#000" stroke-width="5"/>
<path d="M2979 190L3054 265" stroke="#ff0000" stroke-width="4"/>
<use href="#pc" x="2953" y="222"/>
<text class="m" x="3014" y="212" font-size="24" textLength="43" lengthAdjust="spacingAndGlyphs">DDE</text>
<text class="m blue" x="2965" y="293" font-size="27" textLength="76" lengthAdjust="spacingAndGlyphs">ITEM</text>

<!-- SERVER -->
<rect x="3087" y="186" width="112" height="112" fill="#fff" stroke="#000" stroke-width="5"/>
<path d="M3118 190L3191 262" stroke="#ff0000" stroke-width="4"/>
<use href="#pc" x="3089" y="222"/>
<text class="m" x="3149" y="212" font-size="24" textLength="43" lengthAdjust="spacingAndGlyphs">DDE</text>
<text class="m blue" x="3090" y="293" font-size="27" textLength="105" lengthAdjust="spacingAndGlyphs">SERVER</text>

<!-- CLOSE -->
<rect x="3087" y="321" width="112" height="113" fill="#fff" stroke="#000" stroke-width="5"/>
<use href="#pc" x="3090" y="324"/>
<use href="#pc" x="3149" y="354"/>
<text class="m" x="3149" y="348" font-size="24" textLength="43" lengthAdjust="spacingAndGlyphs">DDE</text>
<path d="M3108 372V391H3140" fill="none" stroke="#000" stroke-width="4"/><polygon points="3138,382 3147,391 3138,400" fill="#000"/>
<text class="m blue" x="3105" y="428" font-size="27" textLength="90" lengthAdjust="spacingAndGlyphs">CLOSE</text>

<!-- Muestreo -->
<rect x="2548" y="461" width="190" height="57" fill="#fff" stroke="#000" stroke-width="5"/>
<text x="2551" y="505" class="l" textLength="179" lengthAdjust="spacingAndGlyphs">Muestreo</text>
<use href="#ctl" transform="translate(2541 528)" style="color:#0000ff"/>
<text class="dB" x="2581" y="570" font-size="32" textLength="38" lengthAdjust="spacingAndGlyphs">I8</text>
<rect x="2557" y="617" width="97" height="61" fill="#fff" stroke="#0000ff" stroke-width="8"/>
<text x="2563" y="662" font-size="42" textLength="84" lengthAdjust="spacingAndGlyphs">1000</text>
<polygon points="2687,557 2761,592 2687,629" fill="#ffffcc" stroke="#888878" stroke-width="4"/>
<polygon points="2685,572 2694,581 2685,590" fill="#ff0000"/>
<path d="M2700 584L2718 600M2718 584L2700 600" stroke="#444" stroke-width="5"/>
<!-- metronome -->
<rect x="2775" y="530" width="112" height="113" class="ic"/>
<polygon points="2823,535 2848,535 2850,542 2853,550 2857,558 2857,568 2861,575 2863,597 2867,603 2867,610 2860,613 2852,625 2850,625 2853,612 2852,595 2848,575 2845,558 2842,543 2823,540" fill="#555540"/>
<path d="M2823 538L2817 542V550L2812 568L2808 595L2805 608L2802 610V618L2806 622V633H2852V622M2802 610H2855" fill="none" stroke="#555540" stroke-width="4"/>
<path d="M2794 547L2828 607" stroke="#555540" stroke-width="4"/>
<rect x="2798" y="560" width="14" height="10" fill="#555540"/>
<path d="M2827 548H2834M2827 558H2834M2827 570H2834M2827 577H2834M2827 585H2834M2827 592H2834M2827 600H2834" stroke="#555540" stroke-width="3"/>
<path d="M2829 618L2833 622L2829 626L2825 622z" fill="none" stroke="#555540" stroke-width="2"/>
</svg>
</body></html>
